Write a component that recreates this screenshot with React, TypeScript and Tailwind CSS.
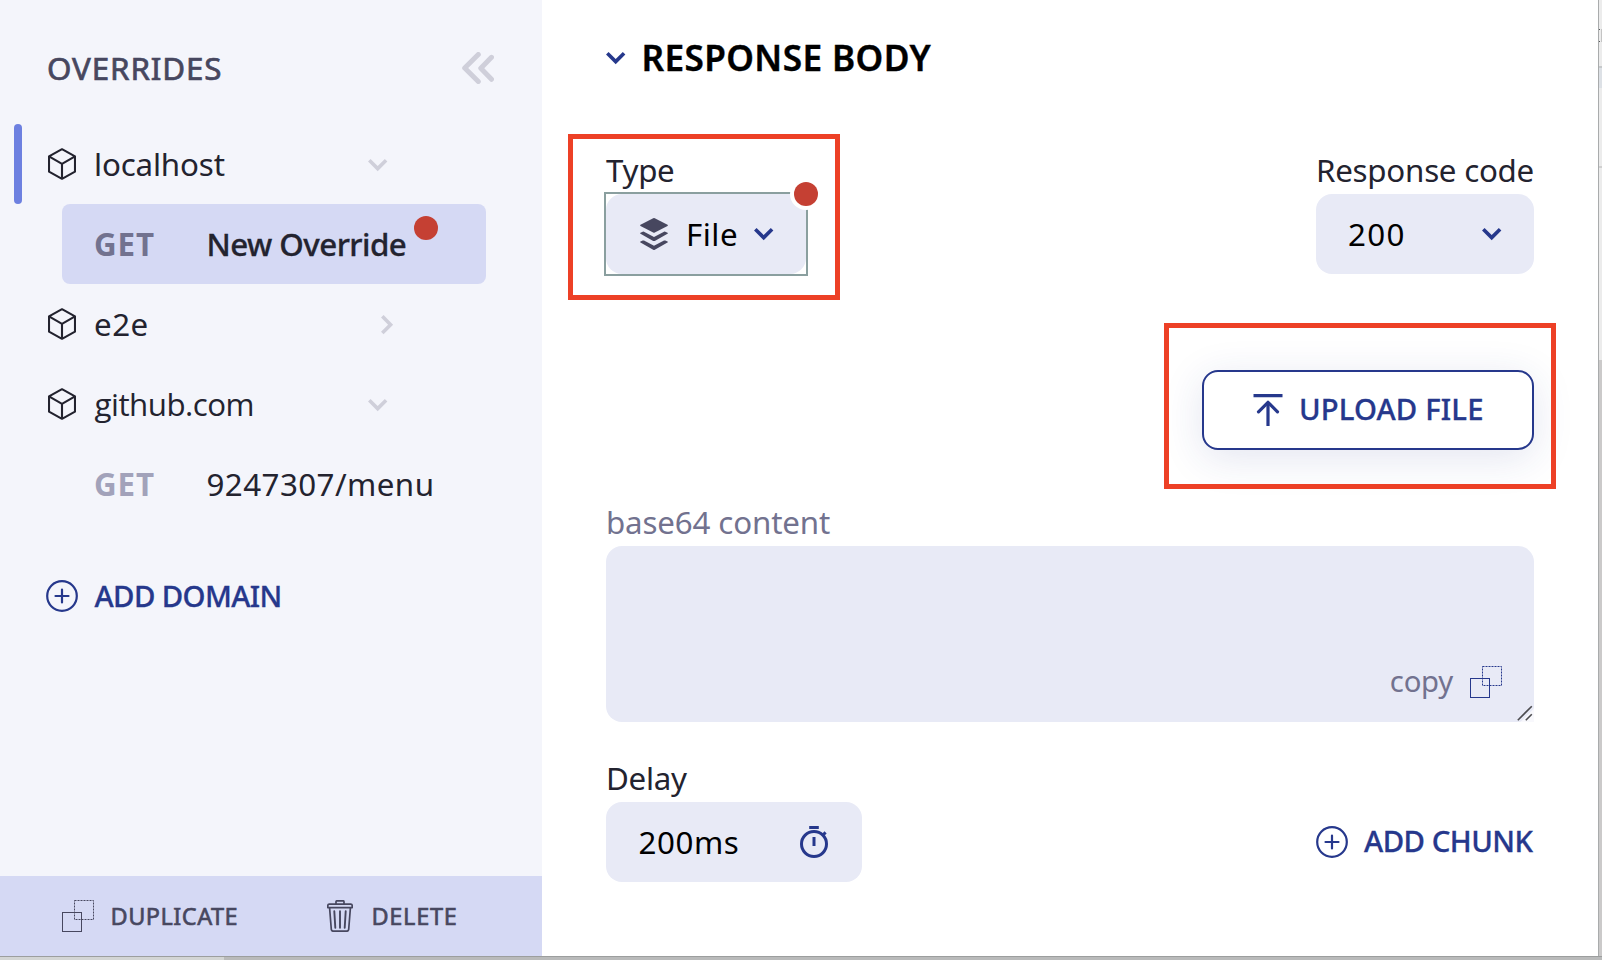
import React from 'react';

type IconProps = { className?: string };

const Cube = () => (
  <svg className="block h-8 w-7 shrink-0" viewBox="0 0 28 32" fill="none" stroke="#23232f" strokeWidth="2.1" strokeLinejoin="round">
    <path d="M14 1.2 27 8.4V23.6L14 30.8 1 23.6V8.4Z M1 8.4 14 15.8 27 8.4 M14 15.8V30.8" />
  </svg>
);

const ChevronDown = ({ className = '' }: IconProps) => (
  <svg className={`block h-3 w-[19.4px] shrink-0 overflow-visible ${className}`} viewBox="0 0 19.4 12" fill="none" stroke="currentColor" strokeWidth="3.6">
    <path d="M1.3 1.300 9.700 9.600 18.100 1.300" />
  </svg>
);

const ChevronRight = ({ className = '' }: IconProps) => (
  <svg className={`block h-[19.4px] w-3 shrink-0 overflow-visible ${className}`} viewBox="0 0 12 19.4" fill="none" stroke="currentColor" strokeWidth="3.6">
    <path d="M1.300 1.300 9.600 9.700 1.300 18.100" />
  </svg>
);

const Collapse = () => (
  <svg className="block size-8" viewBox="0 0 32 32" fill="none" stroke="#cfcfda" strokeWidth="5" strokeLinecap="round" strokeLinejoin="round">
    <path d="M16.3 2.5 2.7 16 16.3 29.5M29.5 5.3 18.8 16.3 29.5 27.3" />
  </svg>
);

const PlusCircle = () => (
  <svg className="block size-8 shrink-0" viewBox="0 0 32 32" fill="none" stroke="#26388c" strokeWidth="2.200" strokeLinecap="round">
    <circle cx="16" cy="16" r="14.8" />
    <path d="M16 9.5v13M9.5 16h13" />
  </svg>
);

const Duplicate = ({ className = '' }: IconProps) => (
  <svg className={`block size-8 shrink-0 ${className}`} viewBox="0 0 32 32" fill="none" stroke="currentColor">
    <rect x=".5" y="12.5" width="19" height="19" />
    <rect x="12.5" y=".5" width="19" height="19" strokeDasharray="2 1" />
  </svg>
);

const Trash = () => (
  <svg className="block h-8 w-[26px] shrink-0" viewBox="0 0 26 32" fill="none" stroke="#47475f" strokeWidth="1.7" strokeLinejoin="round" strokeLinecap="round">
    <path d="M9 4V1.8q0-1 1-1h6q1 0 1 1V4" />
    <path d="M2.2 4.2h21.6q1.4 0 1.4 1.4v2.1H.8V5.6q0-1.4 1.4-1.4Z" />
    <path d="M2.6 8 4.3 29.3q.2 1.900 2 1.900h13.400q1.800 0 2-1.900L23.400 8" />
    <path d="M7.3 11.2 8.3 27.8M13 11.2V27.8M18.7 11.2 17.7 27.8" strokeWidth="1.9" />
  </svg>
);

const Layers = () => (
  <svg className="block h-8 w-7 shrink-0" viewBox="0 0 28 32" fill="#47475f">
    <path d="M13.200.2q.8-.4 1.600 0L27.500 6.700q.8.600 0 1.200L14.800 14.500q-.8.400-1.600 0L.5 7.900q-.8-.600 0-1.200Z" />
    <path d="M.5 14.700 2.700 13.700q.7-.2 1.300.1L14 18.900l10-5.100q.6-.3 1.300-.1l2.200 1q.8.500 0 1.100L14.800 22.900q-.8.400-1.600 0L.5 15.800q-.8-.600 0-1.100Z" />
    <path d="M.5 23.500 2.700 22.500q.7-.2 1.300.1L14 27.700l10-5.100q.6-.3 1.300-.1l2.200 1q.8.500 0 1.100L14.800 31.700q-.8.400-1.600 0L.5 24.600q-.8-.600 0-1.100Z" />
  </svg>
);

const Upload = () => (
  <svg className="block h-8 w-[30px] shrink-0" viewBox="0 0 30 32" fill="none" stroke="#26388c" strokeWidth="3.2">
    <path d="M.5 1.700H29.500M15 32V8" />
    <path d="M5.500 17.800 15 8.300 24.500 17.800" strokeLinejoin="round" strokeLinecap="round" />
  </svg>
);

const Stopwatch = () => (
  <svg className="block h-8 w-7 shrink-0" viewBox="0 0 28 32" fill="none" stroke="#26388c" strokeWidth="3">
    <circle cx="14" cy="18" r="12.500" />
    <path d="M9.200 1.500h9.600M14 11v9M22.800 9.200l2.800-2.800" />
  </svg>
);

const Dot = ({ className = '' }: IconProps) => (
  <span className={`absolute size-6 rounded-full bg-[#c54033] ${className}`} />
);

const label = 'h-12 text-[31.3px] leading-[48px] text-[#23232f]';
const field = 'flex h-20 items-center rounded-2xl bg-[#e8eaf6] text-[31.3px] text-black';
const action = 'pb-px text-[29.3px] font-medium [-webkit-text-stroke:0.3px_#26388c]';

function Sidebar() {
  return (
    <aside className="flex h-[956px] w-[542px] shrink-0 flex-col bg-[#f4f5fb] text-[31.3px] leading-[80px] text-[#23232f]">
      <header className="flex h-[124px] items-center justify-between pt-3 pr-12 pl-[47px]">
        <h2 className="tracking-[0.9px] text-[#47475f] [-webkit-text-stroke:0.7px_#47475f]">OVERRIDES</h2>
        <Collapse />
      </header>

      <div className="flex h-20 items-center pl-3.5">
        <span className="h-20 w-2 rounded-full bg-[#6d80e0]" />
        <span className="ml-[26px]"><Cube /></span>
        <span className="ml-[18px] w-[274px] tracking-[-0.16px]">localhost</span>
        <ChevronDown className="mt-0.5 text-[#cfcfda]" />
      </div>

      <div className="relative ml-[62px] flex h-20 w-[424px] items-center rounded-lg bg-[#d5d9f4] pl-8">
        <span className="w-[112.5px] font-bold tracking-[0.9px] text-[#72728f]">GET</span>
        <span className="font-medium tracking-[-0.55px] [-webkit-text-stroke:0.3px_#23232f]">New Override</span>
        <Dot className="top-3 left-[352px]" />
      </div>

      <div className="flex h-20 items-center pl-12">
        <Cube />
        <span className="ml-[18px] w-[287px] tracking-[0.5px]">e2e</span>
        <ChevronRight className="mt-0.5 text-[#cfcfda]" />
      </div>

      <div className="flex h-20 items-center pl-12">
        <Cube />
        <span className="ml-[18.5px] w-[273.5px] font-['Open_Sans',sans-serif] tracking-[-0.5px]">github.com</span>
        <ChevronDown className="mt-0.5 text-[#cfcfda]" />
      </div>

      <div className="ml-[62px] flex h-20 items-center pl-8">
        <span className="w-[112.5px] font-bold tracking-[0.9px] text-[#a2a2ba]">GET</span>
        <span className="tracking-[0.45px]">9247307/menu</span>
      </div>

      <div className="mt-8 flex h-20 items-center gap-[16.5px] pl-[46px] text-[#26388c]">
        <PlusCircle />
        <span className={`${action} tracking-[-0.6px]`}>ADD DOMAIN</span>
      </div>

      <footer className="mt-auto flex h-20 items-center bg-[#d5d9f4] pl-[62px] text-[23.5px] text-[#47475f]">
        <Duplicate />
        <span className="ml-[16.5px] w-[216.5px] tracking-[0.5px] [-webkit-text-stroke:0.6px_#47475f]">DUPLICATE</span>
        <Trash />
        <span className="ml-[18.5px] tracking-[0.7px] [-webkit-text-stroke:0.6px_#47475f]">DELETE</span>
      </footer>
    </aside>
  );
}

function ResponseBody() {
  return (
    <main className="h-[956px] w-[1056px] shrink-0 bg-white px-16">
      <header className="flex h-[113px] items-center gap-4">
        <ChevronDown className="mt-0.5 text-[#26388c]" />
        <h1 className="pt-0.5 text-[35.2px] font-semibold tracking-[0.4px] text-black [-webkit-text-stroke:0.4px_#000]">RESPONSE BODY</h1>
      </header>

      <div className="mt-[33px] flex justify-between">
        <div className="relative w-[200px]">
          <div className={`${label} tracking-[-0.3px]`}>Type</div>
          <div className={`${field} relative pl-[34px]`}>
            <span className="absolute -inset-0.5 border-2 border-[#8a9f9f]" />
            <Layers />
            <span className="ml-[18px] w-[68px] tracking-[0.5px]">File</span>
            <ChevronDown className="text-[#26388c]" />
            <Dot className="-top-3 -right-3 ring-4 ring-white" />
          </div>
          <div className="absolute -top-3 -left-[38px] h-[166px] w-[272px] border-5 border-[#ed4026]" />
        </div>
        <div className="w-[218px]">
          <div className={`${label} whitespace-nowrap tracking-[-0.25px]`}>Response code</div>
          <div className={`${field} justify-between pr-[33px] pl-8`}>
            <span className="tracking-[1.3px]">200</span>
            <ChevronDown className="text-[#26388c]" />
          </div>
        </div>
      </div>

      <div className="relative mt-24 ml-auto w-[332px]">
        <button className="flex h-20 w-full items-center gap-4 rounded-2xl border-2 border-[#26388c] bg-white pl-[49px] text-[#26388c] shadow-[0_8px_40px_rgba(38,56,140,0.13)]">
          <Upload />
          <span className={`${action} tracking-[0.15px]`}>UPLOAD FILE</span>
        </button>
        <div className="absolute -top-[47px] -left-[38px] h-[166px] w-[392px] border-5 border-[#ed4026]" />
      </div>

      <div className="mt-12 h-12 text-[31.3px] leading-[48px] tracking-[-0.15px] text-[#72728f]">base64 content</div>
      <div className="relative flex h-44 items-end justify-end gap-[17px] rounded-2xl bg-[#e8eaf6] pr-8 pb-6 text-[#26388c]">
        <span className="text-[29.3px] leading-[34px] tracking-[-0.25px] text-[#72728f]">copy</span>
        <Duplicate />
        <svg className="absolute right-0 bottom-0 size-[18px]" viewBox="0 0 18 18" fill="none">
          <path d="M18 4.5V18H4.5Z" fill="#f8f8fc" />
          <path d="M1.8 16.2 15.8 2.2M9.8 16.2l6-6" stroke="#4c4c50" strokeWidth="1.6" />
        </svg>
      </div>

      <div className={`${label} mt-8 tracking-[-0.3px]`}>Delay</div>
      <div className="flex items-center justify-between">
        <div className={`${field} w-64 justify-between pr-[34px] pl-[32.5px]`}>
          <span className="tracking-[0.6px]">200ms</span>
          <Stopwatch />
        </div>
        <div className="flex w-[218px] items-center gap-4 whitespace-nowrap text-[#26388c]">
          <PlusCircle />
          <span className={`${action} tracking-[-0.5px]`}>ADD CHUNK</span>
        </div>
      </div>
    </main>
  );
}

function PageEdge() {
  return (
    <div className="flex h-[956px] w-1 shrink-0 flex-col border-l border-[#a9abac] bg-[#ececec]">
      <span className="mt-[29px] flex h-[13px] flex-col justify-between border-r border-[#c4c4c4]">
        <span className="size-px bg-[#55585a]" />
        <span className="size-px bg-[#55585a]" />
      </span>
      <span className="mt-6 h-0.5 bg-[#c6c9cb]" />
      <span className="h-5 bg-[#dde1e6]" />
      <span className="mt-[78px] h-0.5 bg-[#d0d0d0]" />
      <span className="mt-48 flex-1 bg-[#cbcaca]" />
    </div>
  );
}

export default function App() {
  return (
    <div className="h-[960px] w-[1602px] overflow-hidden bg-white font-['Noto_Sans',sans-serif]">
      <div className="flex">
        <Sidebar />
        <ResponseBody />
        <PageEdge />
      </div>
      <div className="flex h-1 border-t border-[#9c9e9e]">
        <span className="w-56 bg-[#d3d5d4]" />
        <span className="flex-1 bg-[#b9baba]" />
      </div>
    </div>
  );
}
